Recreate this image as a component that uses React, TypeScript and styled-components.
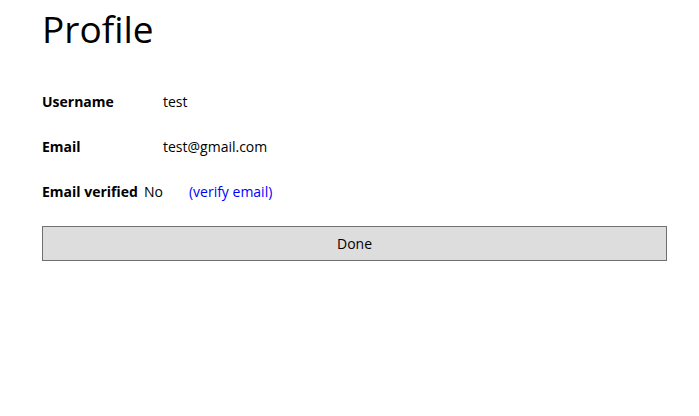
import React from "react";
import styled, { createGlobalStyle } from "styled-components";

const Global = createGlobalStyle`
  html, body { margin: 0; padding: 0; background: #fff; }
  body { font-family: "Open Sans", "Noto Sans", sans-serif; color: #000; }
`;

const Page = styled.div`
  padding: 0 32px 0 42px;
  width: 625px;
`;

const Title = styled.h1`
  margin: 0;
  padding-top: 4px;
  font-size: 37px;
  font-weight: 400;
  line-height: 50px;
`;

const Rows = styled.div`
  margin-top: 38px;
  display: flex;
  flex-direction: column;
  gap: 26px;
`;

const Row = styled.div`
  display: flex;
  align-items: baseline;
  font-size: 14px;
  line-height: 19px;
`;

const Label = styled.span<{ $auto?: boolean }>`
  font-weight: 700;
  min-width: ${(p) => (p.$auto ? "0" : "121px")};
  padding-right: 6px;
  box-sizing: border-box;
`;

const Value = styled.span<{ $wide?: boolean }>`
  min-width: ${(p) => (p.$wide ? "45px" : "0")};
`;

const Link = styled.a`
  color: #0000ff;
  text-decoration: none;
  cursor: pointer;
`;

const Button = styled.button`
  margin-top: 25px;
  width: 625px;
  height: 35px;
  background: #dddddd;
  border: 1px solid #707070;
  font-family: inherit;
  font-size: 14px;
  color: #000;
  padding: 0;
`;

export default function App() {
  return (
    <Page>
      <Global />
      <Title>Profile</Title>
      <Rows>
        <Row>
          <Label>Username</Label>
          <Value>test</Value>
        </Row>
        <Row>
          <Label>Email</Label>
          <Value>test@gmail.com</Value>
        </Row>
        <Row>
          <Label $auto>Email verified</Label>
          <Value $wide>No</Value>
          <Link>(verify email)</Link>
        </Row>
      </Rows>
      <Button>Done</Button>
    </Page>
  );
}
